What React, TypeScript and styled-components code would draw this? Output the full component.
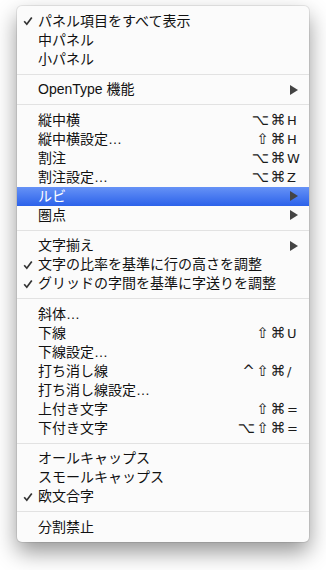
import React from "react";
import styled, { createGlobalStyle } from "styled-components";

// メニュー項目の定義。sep はセパレータ
type Entry =
  | { sep: true }
  | {
      sep?: false;
      label: string;
      checked?: boolean;
      mods?: string;
      keyChar?: string;
      sub?: boolean;
      active?: boolean;
    };

const entries: Entry[] = [
  { label: "パネル項目をすべて表示", checked: true },
  { label: "中パネル" },
  { label: "小パネル" },
  { sep: true },
  { label: "OpenType 機能", sub: true },
  { sep: true },
  { label: "縦中横", mods: "⌥⌘", keyChar: "H" },
  { label: "縦中横設定…", mods: "⇧⌘", keyChar: "H" },
  { label: "割注", mods: "⌥⌘", keyChar: "W" },
  { label: "割注設定…", mods: "⌥⌘", keyChar: "Z" },
  { label: "ルビ", sub: true, active: true },
  { label: "圏点", sub: true },
  { sep: true },
  { label: "文字揃え", sub: true },
  { label: "文字の比率を基準に行の高さを調整", checked: true },
  { label: "グリッドの字間を基準に字送りを調整", checked: true },
  { sep: true },
  { label: "斜体…" },
  { label: "下線", mods: "⇧⌘", keyChar: "U" },
  { label: "下線設定…" },
  { label: "打ち消し線", mods: "^⇧⌘", keyChar: "/" },
  { label: "打ち消し線設定…" },
  { label: "上付き文字", mods: "⇧⌘", keyChar: "=" },
  { label: "下付き文字", mods: "⌥⇧⌘", keyChar: "=" },
  { sep: true },
  { label: "オールキャップス" },
  { label: "スモールキャップス" },
  { label: "欧文合字", checked: true },
  { sep: true },
  { label: "分割禁止" },
];

const App: React.FunctionComponent = () => {
  return (
    <>
      <GlobalStyle />
      <Page>
        <MenuPanel>
          {entries.map((e, idx) => {
            if (e.sep) return <Separator key={idx} />;
            return (
              <Item key={idx} $active={!!e.active}>
                <CheckSlot>
                  {e.checked && (
                    <svg width="10" height="10" viewBox="0 0 10 10">
                      <path
                        d="M1.2 5.2 L3.8 8.2 L8.8 1.4"
                        fill="none"
                        stroke="currentColor"
                        strokeWidth="1.7"
                      />
                    </svg>
                  )}
                </CheckSlot>
                <Label>{e.label}</Label>
                {e.keyChar && (
                  <Shortcut>
                    <Mods>{e.mods}</Mods>
                    <KeyChar>{e.keyChar}</KeyChar>
                  </Shortcut>
                )}
                {e.sub && (
                  <SubArrow width="8" height="10" viewBox="0 0 8 10">
                    <path d="M0 0 L8 5 L0 10 Z" fill="currentColor" />
                  </SubArrow>
                )}
              </Item>
            );
          })}
        </MenuPanel>
      </Page>
    </>
  );
};

const GlobalStyle = createGlobalStyle`
  html, body {
    margin: 0;
    background: #ffffff;
  }
`;

const Page = styled.div`
  min-height: 570px;
  padding: 6px 0 0 17px;
  box-sizing: border-box;
`;

const MenuPanel = styled.div`
  width: 292px;
  padding: 5.5px 0 5px;
  box-sizing: border-box;
  background: #fbfbfb;
  border-radius: 5px;
  box-shadow: 0 0 0 1px rgba(0, 0, 0, 0.08), 0 10px 22px rgba(0, 0, 0, 0.42);
  font-family: "Liberation Sans", "Noto Sans CJK JP", sans-serif;
  font-size: 14px;
`;

const Item = styled.div<{ $active: boolean }>`
  display: flex;
  align-items: center;
  height: 19px;
  line-height: 19px;
  padding-right: 10px;
  color: ${(p) => (p.$active ? "#ffffff" : "#111111")};
  background: ${(p) =>
    p.$active ? "linear-gradient(#6692f6, #2c62ea)" : "transparent"};
`;

const CheckSlot = styled.div`
  width: 21px;
  flex: none;
  display: flex;
  align-items: center;
  padding-left: 6px;
  box-sizing: border-box;
  color: #333333;
`;

const Label = styled.span`
  flex: 1;
  white-space: nowrap;
`;

const Shortcut = styled.span`
  display: flex;
  align-items: baseline;
  font-family: "DejaVu Sans", sans-serif;
  color: #1a1a1a;
`;

const Mods = styled.span`
  font-size: 15px;
  letter-spacing: 1.5px;
  text-align: right;
`;

const KeyChar = styled.span`
  width: 12px;
  font-size: 13px;
  text-align: left;
`;

const SubArrow = styled.svg`
  margin-right: 1px;
  color: #444444;
`;

const Separator = styled.div`
  height: 1px;
  margin: 5px 0 5.5px;
  background: #e2e2e2;
`;

export default App;
